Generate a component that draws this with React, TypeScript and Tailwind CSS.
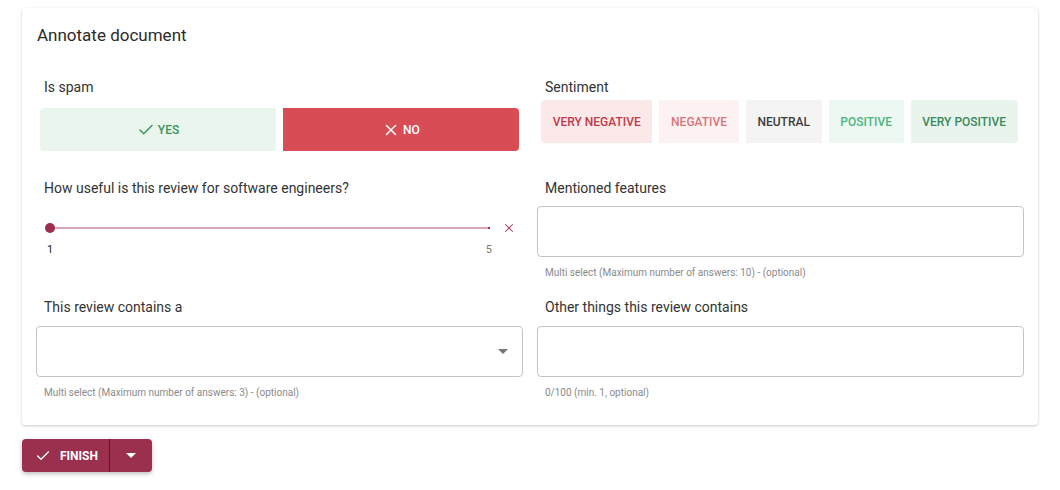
import { Check, X } from 'lucide-react';

const font = { fontFamily: 'Roboto, "Liberation Sans", sans-serif' };

const SENTIMENTS = [
  { label: 'VERY NEGATIVE', cls: 'bg-[#fbe9ea] text-[#c23a4b] rounded-l' },
  { label: 'NEGATIVE', cls: 'bg-[#fdf2f2] text-[#d8727c]' },
  { label: 'NEUTRAL', cls: 'bg-[#f4f4f4] text-[#3d3d3d]' },
  { label: 'POSITIVE', cls: 'bg-[#eef8f3] text-[#4db57e]' },
  { label: 'VERY POSITIVE', cls: 'bg-[#e8f4ec] text-[#3b8a5d] rounded-r' },
];

function Label({ children }: { children: React.ReactNode }) {
  return <div className="h-5 pl-2 text-sm leading-5 text-[#333]">{children}</div>;
}

function Helper({ children }: { children: React.ReactNode }) {
  return <div className="mt-[9px] pl-2 text-[10px] leading-[14px] text-[#8a8a8a]">{children}</div>;
}

function Caret({ className = '' }: { className?: string }) {
  return (
    <svg width="10" height="5" viewBox="0 0 10 5" className={className}>
      <path d="M0 0 L10 0 L5 5 Z" fill="currentColor" />
    </svg>
  );
}

export default function App() {
  return (
    <div className="min-h-[490px] w-[1060px] bg-white pt-2" style={font}>
      {/* Card */}
      <div className="mx-[22px] rounded bg-white px-[14px] pb-[25px] shadow-[0_1px_3px_rgba(0,0,0,0.22)]">
        <div className="pt-[17px] pl-[1px] text-[17px] leading-5 text-[#2b2b2b]">Annotate document</div>

        {/* Row 1 */}
        <div className="mt-8 grid grid-cols-2 gap-x-[14px]">
          <div>
            <Label>Is spam</Label>
            <div className="mx-1 mt-[11px] flex gap-[7px]">
              <button className="flex h-[43px] flex-1 items-center justify-center gap-[3px] rounded-l bg-[#eaf5ee] text-xs font-medium text-[#3b9660]">
                <Check className="h-[18px] w-[18px]" strokeWidth={2} />
                YES
              </button>
              <button className="flex h-[43px] flex-1 items-center justify-center gap-[3px] rounded-r bg-[#d84c55] text-xs font-medium text-white">
                <X className="h-[18px] w-[18px]" strokeWidth={2} />
                NO
              </button>
            </div>
          </div>
          <div>
            <Label>Sentiment</Label>
            <div className="mx-1 mt-[3px] flex gap-[7px]">
              {SENTIMENTS.map((s) => (
                <div
                  key={s.label}
                  className={`flex h-[43px] items-center px-[11.7px] text-xs font-medium ${s.cls}`}
                >
                  {s.label}
                </div>
              ))}
            </div>
          </div>
        </div>

        {/* Row 2 */}
        <div className="mt-[27px] grid grid-cols-2 gap-x-[14px]">
          <div>
            <Label>How useful is this review for software engineers?</Label>
            <div className="mt-[23px] flex items-center pl-[9px]">
              <div className="relative flex h-[10px] w-[445px] items-center">
                <div className="h-[2px] w-full bg-[#d9a7b7]" />
                <div className="absolute left-0 top-0 h-[10px] w-[10px] rounded-full bg-[#9b2d4d]" />
                <div className="absolute right-0 top-[4px] h-[2px] w-[2px] bg-[#9b2d4d]" />
              </div>
              <X className="ml-[12px] h-[14px] w-[14px] text-[#a8385a]" strokeWidth={1.8} />
            </div>
            <div className="mt-[8px] flex w-[456px] justify-between pl-[11px] text-[11px] leading-[14px]">
              <span className="text-[#222]">1</span>
              <span className="text-[#777]">5</span>
            </div>
          </div>
          <div>
            <Label>Mentioned features</Label>
            <div className="mt-2 h-[51px] rounded border border-[#c4c4c4]" />
            <Helper>Multi select (Maximum number of answers: 10) - (optional)</Helper>
          </div>
        </div>

        {/* Row 3 */}
        <div className="mt-[17px] grid grid-cols-2 gap-x-[14px]">
          <div>
            <Label>This review contains a</Label>
            <div className="mt-[9px] flex h-[51px] items-center justify-end rounded border border-[#c4c4c4] pr-[14px]">
              <Caret className="text-[#757575]" />
            </div>
            <Helper>Multi select (Maximum number of answers: 3) - (optional)</Helper>
          </div>
          <div>
            <Label>Other things this review contains</Label>
            <div className="mt-[9px] h-[51px] rounded border border-[#c4c4c4]" />
            <Helper>0/100 (min. 1, optional)</Helper>
          </div>
        </div>
      </div>

      {/* Finish */}
      <div className="mx-[22px] mt-[14px] flex h-[33px] w-[130px] overflow-hidden rounded bg-[#9b2f4e] text-white shadow-[0_2px_4px_rgba(0,0,0,0.25)]">
        <button className="flex w-[88px] items-center gap-[9px] border-r border-[#5e1329] pl-[13px] text-xs font-bold">
          <Check className="h-4 w-4" strokeWidth={2} />
          FINISH
        </button>
        <button className="flex flex-1 items-center justify-center">
          <Caret />
        </button>
      </div>
    </div>
  );
}
